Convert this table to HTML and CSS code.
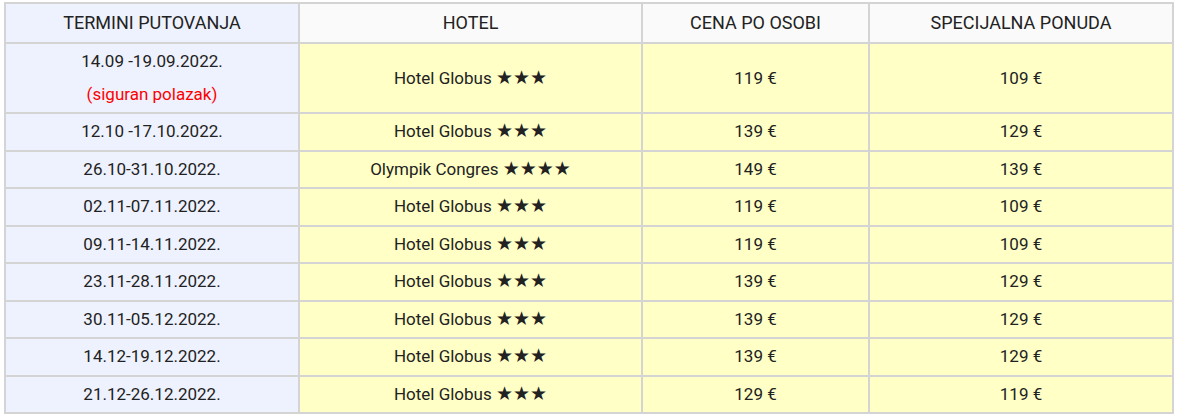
FILE: index.html
```html
<!DOCTYPE html>
<html lang="hr">
<head>
<meta charset="utf-8">
<title>Termini putovanja</title>
<link rel="stylesheet" href="styles.css">
</head>
<body>
<div class="wrap">
<table class="tours">
  <colgroup>
    <col class="c-date">
    <col class="c-hotel">
    <col class="c-price">
    <col class="c-offer">
  </colgroup>
  <thead>
    <tr>
      <th class="date">TERMINI PUTOVANJA</th>
      <th>HOTEL</th>
      <th>CENA PO OSOBI</th>
      <th>SPECIJALNA PONUDA</th>
    </tr>
  </thead>
  <tbody>
    <tr class="tall">
      <td class="date">14.09 -19.09.2022.<br><span class="sure">(siguran polazak)</span></td>
      <td>Hotel Globus <span class="stars">★★★</span></td>
      <td>119 €</td>
      <td>109 €</td>
    </tr>
    <tr>
      <td class="date">12.10 -17.10.2022.</td>
      <td>Hotel Globus <span class="stars">★★★</span></td>
      <td>139 €</td>
      <td>129 €</td>
    </tr>
    <tr>
      <td class="date">26.10-31.10.2022.</td>
      <td>Olympik Congres <span class="stars">★★★★</span></td>
      <td>149 €</td>
      <td>139 €</td>
    </tr>
    <tr>
      <td class="date">02.11-07.11.2022.</td>
      <td>Hotel Globus <span class="stars">★★★</span></td>
      <td>119 €</td>
      <td>109 €</td>
    </tr>
    <tr>
      <td class="date">09.11-14.11.2022.</td>
      <td>Hotel Globus <span class="stars">★★★</span></td>
      <td>119 €</td>
      <td>109 €</td>
    </tr>
    <tr>
      <td class="date">23.11-28.11.2022.</td>
      <td>Hotel Globus <span class="stars">★★★</span></td>
      <td>139 €</td>
      <td>129 €</td>
    </tr>
    <tr>
      <td class="date">30.11-05.12.2022.</td>
      <td>Hotel Globus <span class="stars">★★★</span></td>
      <td>139 €</td>
      <td>129 €</td>
    </tr>
    <tr>
      <td class="date">14.12-19.12.2022.</td>
      <td>Hotel Globus <span class="stars">★★★</span></td>
      <td>139 €</td>
      <td>129 €</td>
    </tr>
    <tr>
      <td class="date">21.12-26.12.2022.</td>
      <td>Hotel Globus <span class="stars">★★★</span></td>
      <td>129 €</td>
      <td>119 €</td>
    </tr>
  </tbody>
</table>
</div>
</body>
</html>
```
FILE: styles.css
```css
html, body {
  margin: 0;
  padding: 0;
  background: #ffffff;
}

.wrap {
  padding: 2px 0 0 4px;
}

.tours {
  width: 1170px;
  table-layout: fixed;
  border-collapse: collapse;
  font-family: Roboto, "Liberation Sans", Arial, sans-serif;
  font-size: 17px;
  color: #222222;
  border: 2px solid #d4d4d4;
}

.c-date { width: 294px; }
.c-hotel { width: 343px; }
.c-price { width: 227px; }
.c-offer { width: 304px; }

.tours th,
.tours td {
  border: 2px solid #d4d4d4;
  text-align: center;
  vertical-align: middle;
  padding: 1px 4px;
  line-height: 33.5px;
  background: #ffffc6;
  white-space: nowrap;
}

.tours th {
  font-weight: normal;
  font-size: 18px;
  background: #fafafa;
  padding: 2px 4px 2px;
  line-height: 34px;
}

.tours th.date,
.tours td.date {
  background: #eef2fe;
}

.tours tr.tall td {
  line-height: 33px;
}

.sure {
  color: #ff0000;
}

.stars {
  font-family: "DejaVu Sans", sans-serif;
  font-size: 19px;
  line-height: 1;
  letter-spacing: 0;
  color: #222222;
}
```
